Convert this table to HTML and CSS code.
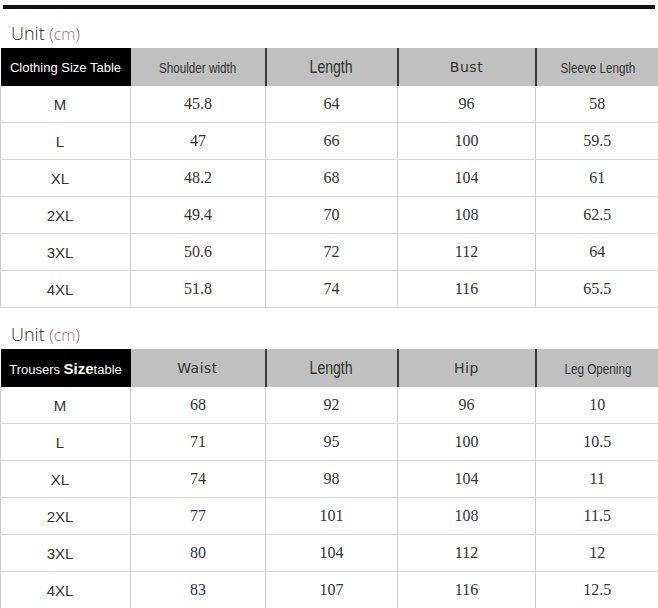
FILE: index.html
```html
<!DOCTYPE html>
<html>
<head>
<meta charset="utf-8">
<link rel="stylesheet" href="styles.css">
</head>
<body>
<div class="page">
  <div class="topline"></div>
  <div class="unit">Unit <span class="paren">(<span class="cm">cm</span>)</span></div>
  <table class="size">
    <colgroup><col class="c1"><col class="c2"><col class="c3"><col class="c4"><col class="c5"></colgroup>
    <thead>
      <tr>
        <th class="title">Clothing Size Table</th>
        <th class="narrow"><span>Shoulder width</span></th>
        <th class="narrow big"><span>Length</span></th>
        <th class="wide">Bust</th>
        <th class="narrow"><span>Sleeve Length</span></th>
      </tr>
    </thead>
    <tbody>
      <tr><td class="sz">M</td><td>45.8</td><td>64</td><td>96</td><td>58</td></tr>
      <tr><td class="sz">L</td><td>47</td><td>66</td><td>100</td><td>59.5</td></tr>
      <tr><td class="sz">XL</td><td>48.2</td><td>68</td><td>104</td><td>61</td></tr>
      <tr><td class="sz">2XL</td><td>49.4</td><td>70</td><td>108</td><td>62.5</td></tr>
      <tr><td class="sz">3XL</td><td>50.6</td><td>72</td><td>112</td><td>64</td></tr>
      <tr><td class="sz">4XL</td><td>51.8</td><td>74</td><td>116</td><td>65.5</td></tr>
    </tbody>
  </table>
  <div class="unit unit2">Unit <span class="paren">(<span class="cm">cm</span>)</span></div>
  <table class="size">
    <colgroup><col class="c1"><col class="c2"><col class="c3"><col class="c4"><col class="c5"></colgroup>
    <thead>
      <tr>
        <th class="title">Trousers <b class="sizeword">Size</b>table</th>
        <th class="wide">Waist</th>
        <th class="narrow big"><span>Length</span></th>
        <th class="wide">Hip</th>
        <th class="narrow"><span>Leg Opening</span></th>
      </tr>
    </thead>
    <tbody>
      <tr><td class="sz">M</td><td>68</td><td>92</td><td>96</td><td>10</td></tr>
      <tr><td class="sz">L</td><td>71</td><td>95</td><td>100</td><td>10.5</td></tr>
      <tr><td class="sz">XL</td><td>74</td><td>98</td><td>104</td><td>11</td></tr>
      <tr><td class="sz">2XL</td><td>77</td><td>101</td><td>108</td><td>11.5</td></tr>
      <tr><td class="sz">3XL</td><td>80</td><td>104</td><td>112</td><td>12</td></tr>
      <tr><td class="sz">4XL</td><td>83</td><td>107</td><td>116</td><td>12.5</td></tr>
    </tbody>
  </table>
</div>
</body>
</html>
```
FILE: styles.css
```css
html, body {
  margin: 0;
  padding: 0;
  background: #fff;
}
.page {
  width: 658px;
  padding-top: 5px;
  font-family: "Liberation Sans", Arial, sans-serif;
  color: #333;
}
.topline {
  height: 4px;
  margin: 0 3px;
  background: #111;
}
.unit {
  font-family: "Open Sans", "Liberation Sans", sans-serif;
  font-weight: 300;
  font-size: 18px;
  color: #2a2a2a;
  padding-left: 11px;
  height: 39px;
  line-height: 48px;
}
.unit2 {
  height: 41px;
  line-height: 52px;
}
.paren {
  color: #666;
  font-size: 16px;
}
.cm {
  color: #c0646e;
}
.size {
  border-collapse: collapse;
  table-layout: fixed;
  width: 658px;
}
.c1 { width: 130px; }
.c2 { width: 135px; }
.c3 { width: 132px; }
.c4 { width: 138px; }
.c5 { width: 123px; }
.size th {
  height: 38px;
  padding: 0;
  background: #c0c0c0;
  font-weight: normal;
  color: #333;
  text-align: center;
  border-left: 2px solid #3a3a3a;
  white-space: nowrap;
}
.size th.title {
  background: #000;
  color: #fff;
  font-family: "Liberation Sans", Arial, sans-serif;
  font-size: 13px;
  border-left: none;
}
.size th:nth-child(2) {
  border-left: none;
}
.narrow {
  font-family: "Liberation Sans", Arial, sans-serif;
  font-size: 15px;
}
.narrow span {
  display: inline-block;
  transform: scaleX(0.78);
}
.big {
  font-size: 19px;
}
.big span {
  transform: scaleX(0.74);
}
.wide {
  font-family: "DejaVu Sans", sans-serif;
  font-size: 14px;
  letter-spacing: 0.5px;
  color: #3a3a3a;
}
.sizeword {
  font-size: 15px;
  font-weight: bold;
}
.size td {
  height: 36px;
  padding: 0;
  text-align: center;
  font-family: "Liberation Serif", "Times New Roman", serif;
  font-size: 16px;
  color: #333;
  border-left: 1px solid #cfcfcf;
  border-bottom: 1px solid #d6d6d6;
}
.size td.sz {
  font-family: "Liberation Sans", Arial, sans-serif;
  font-size: 15px;
  padding-right: 11px;
}
```
